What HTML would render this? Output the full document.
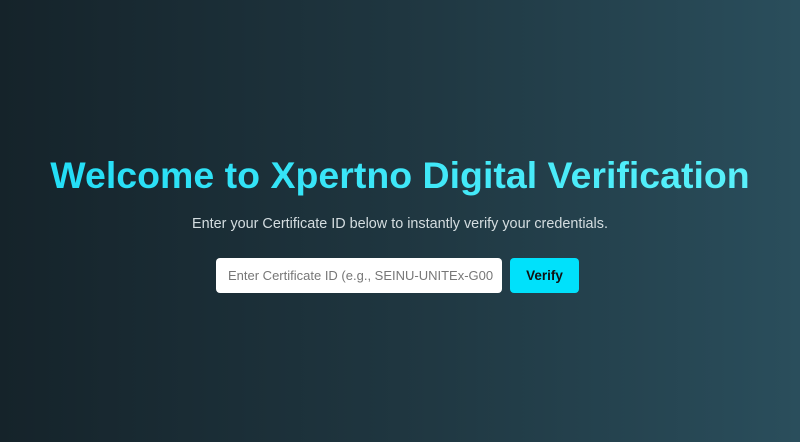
<!DOCTYPE html>
<html><head><style>
html,body{margin:0;width:800px;height:442px;overflow:hidden}
body{background:linear-gradient(90deg,#15232a 0%,#1f3640 50%,#2a4e5c 100%);font-family:"Liberation Sans",sans-serif;position:relative}
h1{position:absolute;top:148px;left:0;width:800px;text-align:center;margin:0;font-size:37.5px;font-weight:bold;letter-spacing:0;
background:linear-gradient(90deg,#1fdcf5,#5df2fb);-webkit-background-clip:text;background-clip:text;color:transparent;line-height:54px}
p{position:absolute;top:215px;left:0;width:800px;text-align:center;margin:0;font-size:14.4px;color:#d4dde0;line-height:18px}
.in{position:absolute;left:216px;top:258px;width:286px;height:35px;background:#fff;border-radius:4px;box-sizing:border-box;padding-left:12px;font-size:13px;color:#777;line-height:35px;white-space:nowrap;overflow:hidden}
.bt{position:absolute;left:510px;top:258px;width:69px;height:35px;background:#00e1fb;border-radius:4px;font-size:13.5px;font-weight:bold;color:#111;text-align:center;line-height:35px}
</style></head><body>
<h1>Welcome to Xpertno Digital Verification</h1>
<p>Enter your Certificate ID below to instantly verify your credentials.</p>
<div class="in">Enter Certificate ID (e.g., SEINU-UNITEx-G00</div>
<div class="bt">Verify</div>
</body></html>
